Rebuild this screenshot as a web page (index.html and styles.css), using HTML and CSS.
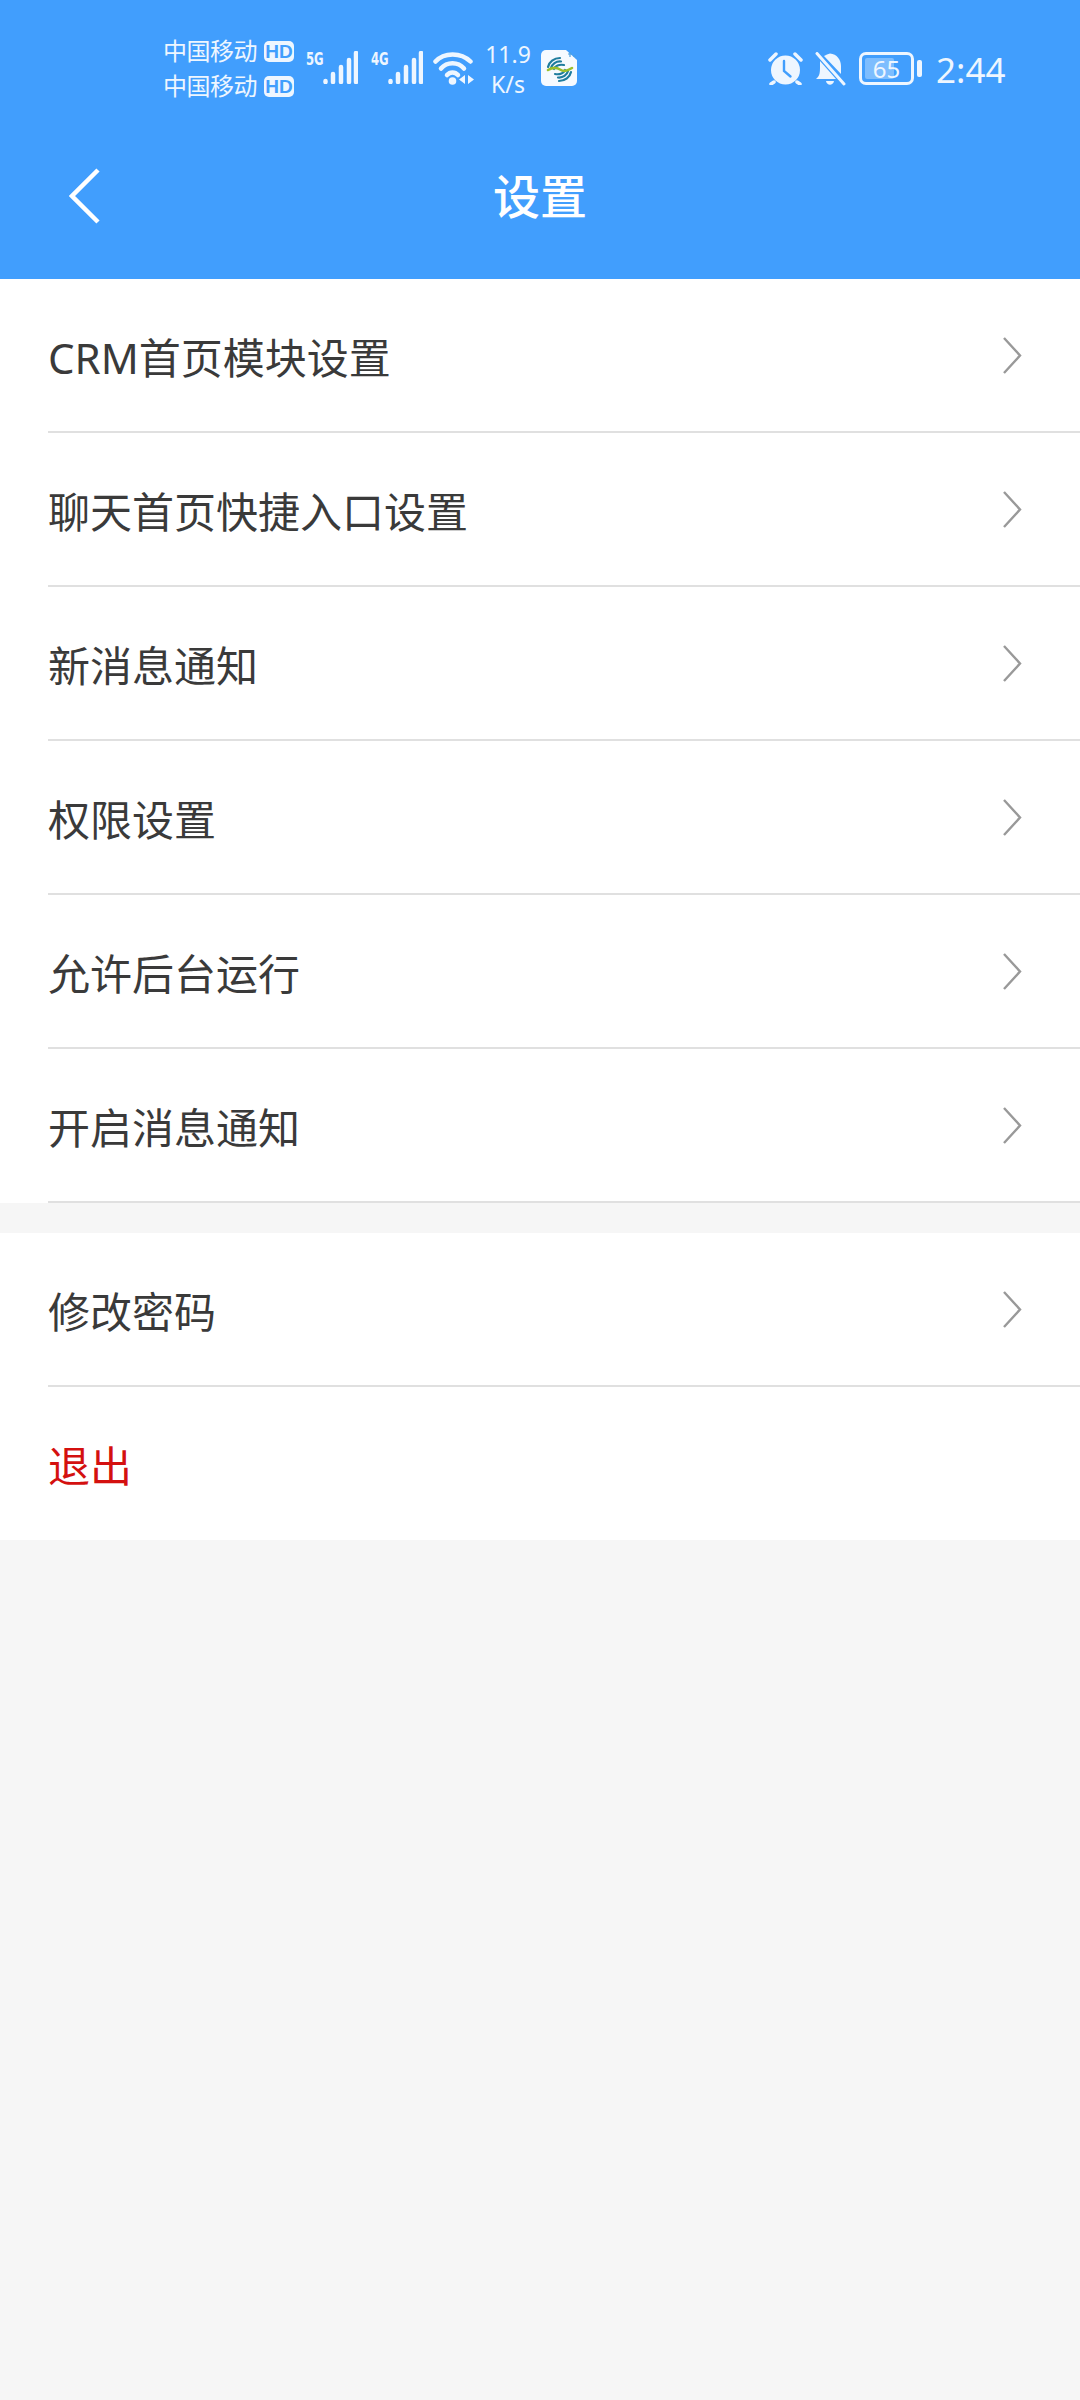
FILE: index.html
```html
<!DOCTYPE html>
<html lang="zh-CN">
<head>
    <meta charset="UTF-8">
    <meta name="viewport" content="width=device-width, initial-scale=1.0">
    <title>设置</title>
    <link rel="stylesheet" href="styles.css">
</head>
<body>
    <header class="top">
        <div class="status">
            <div class="carriers">
                <div class="carrier"><span>中国移动</span><b class="hd">HD</b></div>
                <div class="carrier"><span>中国移动</span><b class="hd">HD</b></div>
            </div>
            <div class="signal">
                <span class="net">5G</span>
                <svg class="bars" width="35" height="33" viewBox="0 0 35 33"><g stroke="#eef6ff" stroke-width="4.500" stroke-linecap="round"><path d="M2.500 30v1M10 23v8M18 16v15M26 9v22M33 2v29"/></g></svg>
            </div>
            <div class="signal signal-second">
                <span class="net">4G</span>
                <svg class="bars" width="35" height="33" viewBox="0 0 35 33"><g stroke="#eef6ff" stroke-width="4.500" stroke-linecap="round"><path d="M2.500 30v1M10 23v8M18 16v15M26 9v22M33 2v29"/></g></svg>
            </div>
            <svg class="wifi" width="41" height="34" viewBox="0 0 41 34">
                <g fill="none" stroke="#eef6ff" stroke-width="4.500" stroke-linecap="round">
                    <path d="M2.500 10.500C11 1 28 1 37.500 10.500"/>
                    <path d="M8 17.500C14 10.500 25 10.500 31 17.500"/>
                    <path d="M14 24C17 20.500 22 20.500 25 24"/>
                </g>
                <circle cx="19.500" cy="30" r="3.800" fill="#eef6ff"/>
                <path d="M32 24v9l-6-4.500zM35 24v9l6-4.500z" fill="#eef6ff"/>
            </svg>
            <div class="speed"><span>11.9</span><span>K/s</span></div>
            <svg class="sim" width="36" height="36" viewBox="0 0 36 36">
                <path d="M5 0H25L36 10V31a5 5 0 0 1-5 5H5a5 5 0 0 1-5-5V5a5 5 0 0 1 5-5z" fill="#f6faff"/>
                <g fill="none" stroke="#1f7d9e" stroke-width="2.200" stroke-linecap="round">
                    <path d="M7 17C8 12 13 8 19 8"/>
                    <path d="M10 18C11 14 15 11 20 11.500"/>
                    <path d="M13 19C14 16 18 14 23 15"/>
                    <path d="M30 22C29 27 24 31 18 31"/>
                    <path d="M27 21C26 25 22 28 17 27.500"/>
                    <path d="M24 20C23 23 19 25 14 24"/>
                </g>
                <path d="M7 20C12 17 15 17 19 19.500C23 22 26 21 31 18" fill="none" stroke="#9bbf2c" stroke-width="2.600" stroke-linecap="round"/>
                <path d="M29 2v5M27 4h4M32 6h3" stroke="#4a9fe0" stroke-width="1.200"/>
            </svg>
            <div class="status-right">
                <svg class="alarm" width="35" height="33" viewBox="0 0 35 33">
                    <circle cx="17.500" cy="18" r="14.500" fill="#eef6ff"/>
                    <path d="M16 9v10l6.500 5.500" fill="none" stroke="#419efd" stroke-width="2.400" stroke-linecap="round"/>
                    <path d="M2 8L8 2M33 8L27 2M6 30l-3 2M29 30l3 2" stroke="#eef6ff" stroke-width="3.500" stroke-linecap="round"/>
                </svg>
                <svg class="bell" width="31" height="34" viewBox="0 0 31 34">
                    <path d="M5 9L21 27H1C5 24 5 20 5 14zM9 4C11 3 13 2 15 1.500C22 2 26 8 26 14V22z" fill="#eef6ff"/>
                    <path d="M11 29h8c-1 5-7 5-8 0z" fill="#eef6ff"/>
                    <path d="M2 1.500L29 32" stroke="#eef6ff" stroke-width="3" stroke-linecap="round"/>
                </svg>
                <div class="battery">
                    <div class="battery-box">
                        <div class="battery-fill"></div>
                        <span class="battery-num">65</span>
                    </div>
                    <div class="battery-cap"></div>
                </div>
                <span class="clock">2:44</span>
            </div>
        </div>
        <div class="nav">
            <svg class="back" width="31" height="56" viewBox="0 0 31 56"><path d="M29 2L3 28L29 54" fill="none" stroke="#fff" stroke-width="4.500"/></svg>
            <h1 class="title">设置</h1>
        </div>
    </header>

    <section class="group">
        <div class="row"><div class="row-in"><span>CRM首页模块设置</span><svg class="arrow" width="20" height="37" viewBox="0 0 20 37"><path d="M2 1L18 18.500L2 36" fill="none" stroke="#999" stroke-width="2.400"/></svg></div></div>
        <div class="row"><div class="row-in"><span>聊天首页快捷入口设置</span><svg class="arrow" width="20" height="37" viewBox="0 0 20 37"><path d="M2 1L18 18.500L2 36" fill="none" stroke="#999" stroke-width="2.400"/></svg></div></div>
        <div class="row"><div class="row-in"><span>新消息通知</span><svg class="arrow" width="20" height="37" viewBox="0 0 20 37"><path d="M2 1L18 18.500L2 36" fill="none" stroke="#999" stroke-width="2.400"/></svg></div></div>
        <div class="row"><div class="row-in"><span>权限设置</span><svg class="arrow" width="20" height="37" viewBox="0 0 20 37"><path d="M2 1L18 18.500L2 36" fill="none" stroke="#999" stroke-width="2.400"/></svg></div></div>
        <div class="row"><div class="row-in"><span>允许后台运行</span><svg class="arrow" width="20" height="37" viewBox="0 0 20 37"><path d="M2 1L18 18.500L2 36" fill="none" stroke="#999" stroke-width="2.400"/></svg></div></div>
        <div class="row"><div class="row-in"><span>开启消息通知</span><svg class="arrow" width="20" height="37" viewBox="0 0 20 37"><path d="M2 1L18 18.500L2 36" fill="none" stroke="#999" stroke-width="2.400"/></svg></div></div>
    </section>

    <section class="group group-second">
        <div class="row"><div class="row-in"><span>修改密码</span><svg class="arrow" width="20" height="37" viewBox="0 0 20 37"><path d="M2 1L18 18.500L2 36" fill="none" stroke="#999" stroke-width="2.400"/></svg></div></div>
        <div class="row row-last"><div class="row-in"><span class="logout">退出</span></div></div>
    </section>
</body>
</html>
```

FILE: styles.css
```css
* {
    box-sizing: border-box;
}
html, body {
    margin: 0;
    padding: 0;
}
body {
    width: 1080px;
    min-height: 2400px;
    background: #f6f6f6;
    font-family: "Noto Sans", "Noto Sans CJK SC", sans-serif;
    color: #3a3a3a;
}

/* blue top part */
.top {
    height: 279px;
    background: #419efd;
    color: #eef6ff;
}
.status {
    height: 108px;
    padding: 38px 0 0 163px;
    display: flex;
    align-items: flex-start;
}
.carriers {
    width: 134px;
    display: flex;
    flex-direction: column;
    gap: 11px;
    padding-top: 1px;
}
.carrier {
    height: 24px;
    display: flex;
    align-items: center;
    gap: 7px;
    font-size: 24px;
    line-height: 24px;
    letter-spacing: -0.5px;
    white-space: nowrap;
}
.hd {
    width: 30px;
    height: 21px;
    border-radius: 5px;
    background: #eef6ff;
    color: #419efd;
    font: bold 19px/21px "Liberation Sans", sans-serif;
    letter-spacing: 0;
    text-align: center;
}
.signal {
    width: 52px;
    margin-top: 13px;
    margin-left: 9px;
    display: flex;
    align-items: flex-start;
}
.signal-second {
    margin-left: 13px;
}
.net {
    width: 17px;
    font: bold 18px/16px "DejaVu Sans Condensed", "DejaVu Sans", sans-serif;
    transform: scaleX(0.72);
    transform-origin: left;
}
.wifi {
    margin-top: 13px;
    margin-left: 10px;
}
.speed {
    width: 56px;
    margin-left: 6px;
    margin-top: 4px;
    display: flex;
    flex-direction: column;
    align-items: center;
    gap: 5px;
    font: 23px/25px "Noto Sans", sans-serif;
}
.sim {
    margin-top: 12px;
    margin-left: 5px;
}
.status-right {
    display: flex;
    align-items: flex-start;
    margin-left: 191px;
    margin-top: 14px;
}
.bell {
    margin-left: 12px;
}
.battery {
    margin-left: 13px;
    display: flex;
    align-items: center;
    gap: 3px;
}
.battery-box {
    width: 55px;
    height: 33px;
    border: 3px solid #eef6ff;
    border-radius: 7px;
    padding: 3px;
    display: flex;
    align-items: center;
    justify-content: center;
    position: relative;
}
.battery-fill {
    position: absolute;
    left: 3px;
    top: 3px;
    bottom: 3px;
    width: 29px;
    background: rgba(238, 246, 255, 0.35);
    border-radius: 2px;
}
.battery-num {
    position: relative;
    font: 24px/24px "Noto Sans", sans-serif;
}
.battery-cap {
    width: 5px;
    height: 17px;
    border-radius: 2px;
    background: #eef6ff;
}
.clock {
    margin-left: 14px;
    margin-top: -1px;
    font: 35px/38px "Noto Sans", sans-serif;
}
.nav {
    height: 171px;
    padding: 60px 0 0 69px;
    display: flex;
    align-items: flex-start;
    position: relative;
}
.back {
    display: block;
}
.title {
    position: absolute;
    left: 0;
    right: 0;
    top: 60px;
    margin: 0;
    text-align: center;
    font-size: 47px;
    line-height: 56px;
    font-weight: 500;
    color: #fff;
}

/* list */
.group {
    background: #fff;
}
.group-second {
    margin-top: 30px;
}
.row {
    height: 154px;
    padding-left: 48px;
}
.row-in {
    height: 100%;
    padding-right: 58px;
    border-bottom: 2px solid #e0e0e0;
    display: flex;
    align-items: center;
    justify-content: space-between;
    font-size: 42px;
}
.row-last {
    height: 153px;
}
.row-last .row-in {
    border-bottom: 0;
}
.arrow {
    display: block;
}
.logout {
    color: #d4100f;
}
```
